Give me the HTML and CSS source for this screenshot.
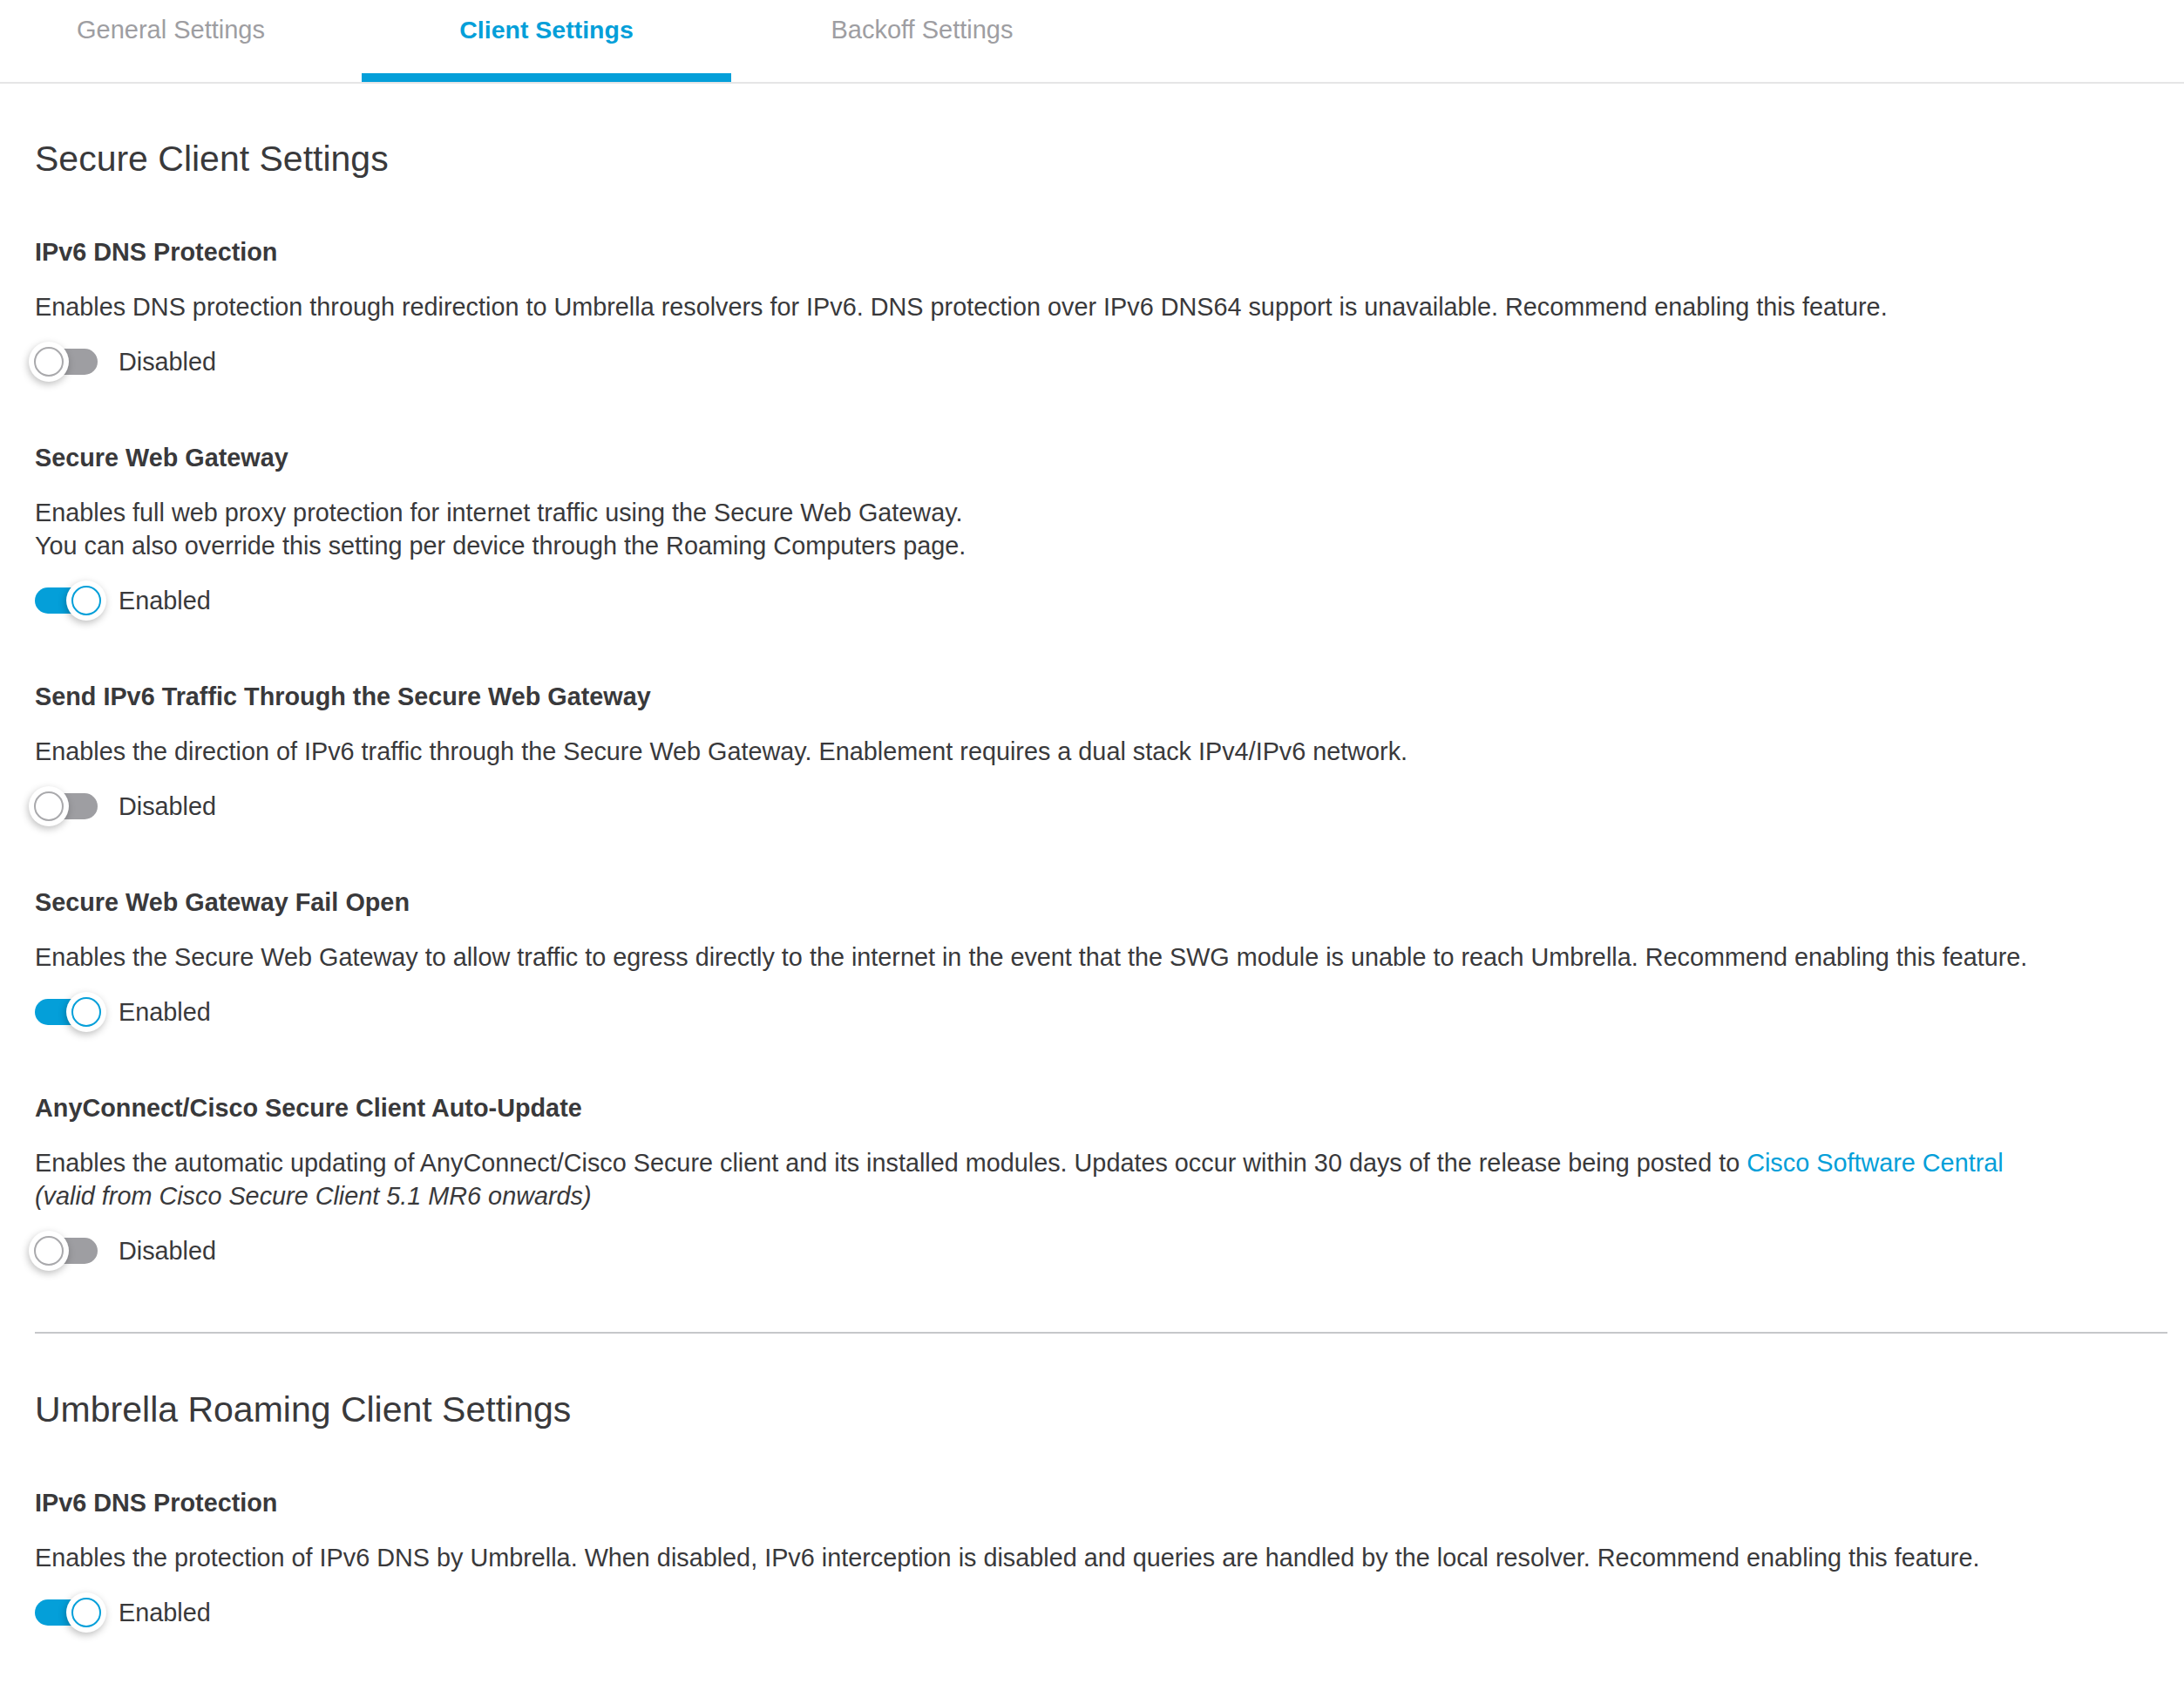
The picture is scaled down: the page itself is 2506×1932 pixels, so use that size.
FILE: index.html
```html
<!DOCTYPE html>
<html lang="en">
<head>
  <meta charset="UTF-8">
  <meta name="viewport" content="width=device-width, initial-scale=1.0">
  <title>Client Settings</title>
  <link rel="stylesheet" href="styles.css">
</head>
<body>

  <div class="tabs">
    <div class="tab">General Settings</div>
    <div class="tab active">Client Settings</div>
    <div class="tab">Backoff Settings</div>
  </div>

  <div class="content">
    <h2>Secure Client Settings</h2>

    <div class="setting">
      <h4>IPv6 DNS Protection</h4>
      <p>Enables DNS protection through redirection to Umbrella resolvers for IPv6. DNS protection over IPv6 DNS64 support is unavailable. Recommend enabling this feature.</p>
      <label class="toggle"><span class="switch"><span class="track"></span><span class="knob"></span></span>Disabled</label>
    </div>

    <div class="setting">
      <h4>Secure Web Gateway</h4>
      <p>Enables full web proxy protection for internet traffic using the Secure Web Gateway.<br>You can also override this setting per device through the Roaming Computers page.</p>
      <label class="toggle on"><span class="switch"><span class="track"></span><span class="knob"></span></span>Enabled</label>
    </div>

    <div class="setting">
      <h4>Send IPv6 Traffic Through the Secure Web Gateway</h4>
      <p>Enables the direction of IPv6 traffic through the Secure Web Gateway. Enablement requires a dual stack IPv4/IPv6 network.</p>
      <label class="toggle"><span class="switch"><span class="track"></span><span class="knob"></span></span>Disabled</label>
    </div>

    <div class="setting">
      <h4>Secure Web Gateway Fail Open</h4>
      <p>Enables the Secure Web Gateway to allow traffic to egress directly to the internet in the event that the SWG module is unable to reach Umbrella. Recommend enabling this feature.</p>
      <label class="toggle on"><span class="switch"><span class="track"></span><span class="knob"></span></span>Enabled</label>
    </div>

    <div class="setting">
      <h4>AnyConnect/Cisco Secure Client Auto-Update</h4>
      <p>Enables the automatic updating of AnyConnect/Cisco Secure client and its installed modules. Updates occur within 30 days of the release being posted to <a href="#">Cisco Software Central</a><br><em>(valid from Cisco Secure Client 5.1 MR6 onwards)</em></p>
      <label class="toggle"><span class="switch"><span class="track"></span><span class="knob"></span></span>Disabled</label>
    </div>

    <hr>

    <h2>Umbrella Roaming Client Settings</h2>

    <div class="setting">
      <h4>IPv6 DNS Protection</h4>
      <p>Enables the protection of IPv6 DNS by Umbrella. When disabled, IPv6 interception is disabled and queries are handled by the local resolver. Recommend enabling this feature.</p>
      <label class="toggle on"><span class="switch"><span class="track"></span><span class="knob"></span></span>Enabled</label>
    </div>
  </div>

</body>
</html>
```

FILE: styles.css
```css
/* General body styling */
body {
  font-family: 'Liberation Sans', Arial, sans-serif;
  margin: 0;
  padding: 0;
  background: #fff;
  color: #39393b;
}

/* Tabs */
.tabs {
  display: flex;
  gap: 7px;
  height: 94px;
  border-bottom: 2px solid #e5e5e6;
}

.tab {
  width: 424px;
  box-sizing: border-box;
  text-align: center;
  font-size: 29px;
  line-height: 68px;
  color: #9e9ea2;
}

.tab:first-child {
  margin-left: -16px;
}

.tab.active {
  color: #049fd9;
  font-weight: bold;
  font-size: 28.5px;
  border-bottom: 10px solid #049fd9;
  height: 94px;
}

/* Content */
.content {
  padding: 0 19px 60px 40px;
}

h2 {
  font-size: 41px;
  font-weight: normal;
  line-height: 48px;
  margin: 62px 0 0;
}

hr {
  border: none;
  border-top: 2px solid #c6c7ca;
  margin: 70px 0 63px;
}

hr + h2 {
  margin-top: 0;
}

.setting {
  margin-top: 68px;
}

h2 + .setting {
  margin-top: 64px;
}

.setting h4 {
  font-size: 28.8px;
  font-weight: bold;
  line-height: 38px;
  margin: 0;
}

.setting p {
  font-size: 28.8px;
  line-height: 38px;
  margin: 25px 0 0;
}

.setting a {
  color: #049fd9;
  text-decoration: none;
}

/* Toggle switch */
.toggle {
  display: flex;
  align-items: center;
  gap: 24px;
  margin-top: 21px;
  font-size: 28.8px;
  line-height: 46px;
}

.switch {
  position: relative;
  width: 72px;
  height: 46px;
}

.track {
  position: absolute;
  left: 0;
  top: 8px;
  width: 72px;
  height: 30px;
  border-radius: 15px;
  background-color: #9e9ea2;
}

.knob {
  position: absolute;
  left: -7px;
  top: 0;
  width: 46px;
  height: 46px;
  border-radius: 50%;
  background: #fff;
  box-shadow: -1px 3px 8px rgba(0, 0, 0, 0.25);
}

.knob::after {
  content: '';
  position: absolute;
  left: 6px;
  top: 6px;
  width: 30px;
  height: 30px;
  border-radius: 50%;
  border: 2px solid #a9a9ac;
}

.toggle.on .track {
  background: linear-gradient(90deg, #049fd9 55%, #3fb2e0);
}

.toggle.on .knob {
  left: 36px;
}

.toggle.on .knob::after {
  border-color: #049fd9;
}
```
